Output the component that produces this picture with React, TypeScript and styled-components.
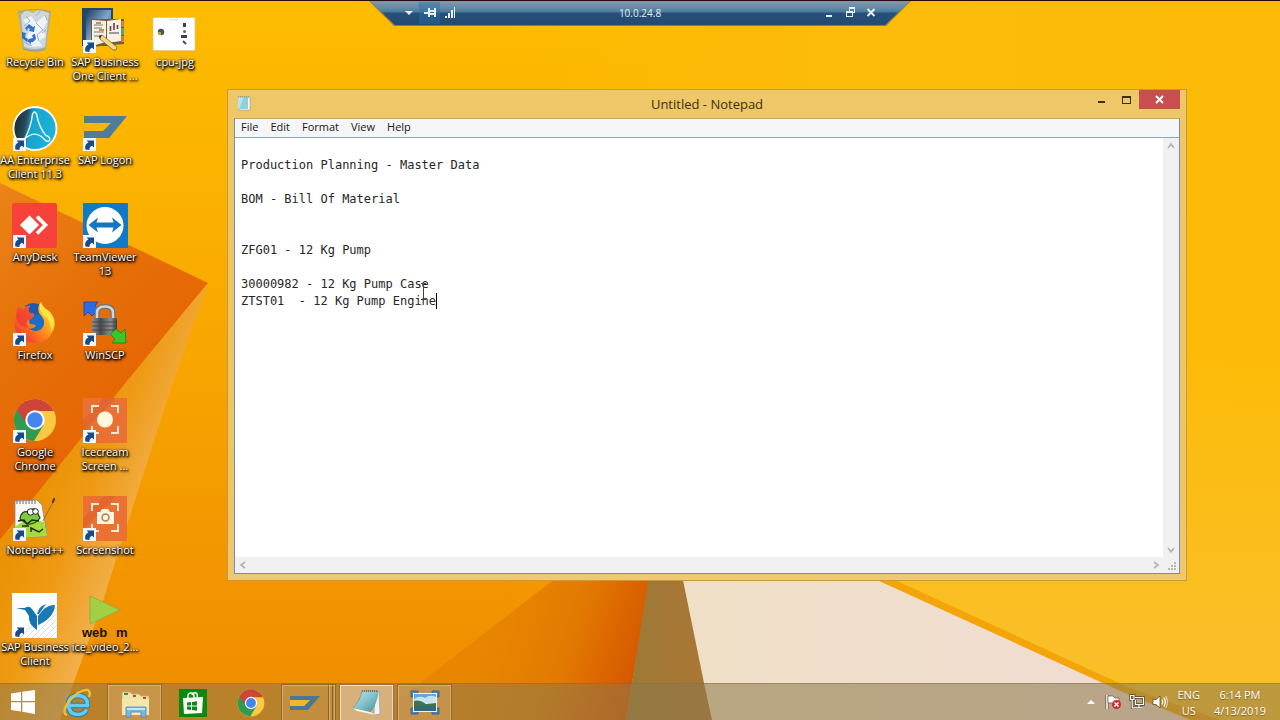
import React from 'react';
import styled, { createGlobalStyle, css } from 'styled-components';

const GlobalStyle = createGlobalStyle`
  *, *::before, *::after { box-sizing: border-box; }
  body {
    margin: 0;
    font-family: "Open Sans", "Noto Sans", sans-serif;
    font-size: 11px;
    color: #1c1c1c;
  }
  button {
    margin: 0;
    padding: 0;
    border: 0;
    background: none;
    font: inherit;
    color: inherit;
    cursor: default;
  }
  svg { display: block; }
`;

/* ---------- Desktop ---------- */

const Desktop = styled.div`
  position: relative;
  isolation: isolate;
  min-height: 100vh;
  display: flex;
  flex-direction: column;
  overflow: hidden;
  background: #fbb400;
`;

const Wallpaper = styled.svg`
  position: absolute;
  inset: 0;
  width: 100%;
  height: 100%;
  z-index: -1;
`;

const IconGrid = styled.main`
  flex: 1;
  display: grid;
  grid-auto-flow: column;
  grid-template-rows: repeat(7, minmax(84px, 1fr));
  grid-auto-columns: 70px;
  justify-content: start;
`;

const Shortcut = styled.button<{ $column: number; $row: number }>`
  grid-column: ${(p) => p.$column};
  grid-row: ${(p) => p.$row};
  display: flex;
  flex-direction: column;
  align-items: center;
  gap: 1px;
  padding-top: 8px;
`;

const ShortcutLabel = styled.span`
  line-height: 14px;
  color: #fff;
  white-space: pre;
  text-align: center;
  text-shadow: 0 1px 2px #000, 1px 1px 2px #000, 0 0 3px rgba(0, 0, 0, 0.8), 1px 2px 3px rgba(0, 0, 0, 0.7);
`;

/* ---------- Remote session bar ---------- */

const SessionBarOuter = styled.header`
  position: absolute;
  top: 0;
  left: 0;
  right: 0;
  display: flex;
  justify-content: center;
  border-top: 1px solid #2a0a08;
  z-index: 3;
`;

const SessionBarEdge = styled.div`
  width: 542px;
  padding: 0 1px 1px;
  background: #8b7d3a;
  clip-path: polygon(0 0, 100% 0, calc(100% - 25px) 100%, 25px 100%);
`;

const SessionBar = styled.div`
  display: grid;
  grid-template-columns: 1fr auto 1fr;
  align-items: center;
  height: 24px;
  padding: 0 28px;
  color: #e8eef4;
  background: linear-gradient(#8199ad 0, #648aa6 7px, #4b789b 11px, #27507a 12px, #234a70 24px);
  clip-path: polygon(0 0, 100% 0, calc(100% - 25px) 100%, 25px 100%);
`;

const SessionAddress = styled.span`
  font-size: 10px;
`;

const SessionGroup = styled.div<{ $end?: boolean }>`
  display: flex;
  justify-content: ${(p) => (p.$end ? 'flex-end' : 'flex-start')};
`;

const SessionButton = styled.button<{ $pinned?: boolean }>`
  display: grid;
  place-items: center;
  width: 21px;
  height: 22px;
  background: ${(p) => (p.$pinned ? 'rgba(40, 110, 165, 0.45)' : 'none')};
`;

/* ---------- Notepad window ---------- */

const Window = styled.section`
  position: absolute;
  top: 89px;
  left: 227px;
  right: 93px;
  bottom: 139px;
  display: flex;
  flex-direction: column;
  padding: 0 6px 6px;
  border: 1px solid #c79a38;
  background: linear-gradient(#edc768, #ecc564 80%, #f0c774);
  z-index: 2;
`;

const TitleBar = styled.div`
  display: grid;
  grid-template-columns: 1fr auto 1fr;
  align-items: center;
  height: 28px;
  color: #3a2f16;
`;

const WindowTitle = styled.h1`
  margin: 0;
  font-size: 13px;
  line-height: 26px;
  font-weight: 400;
`;

const TitleIcon = styled.span`
  padding-left: 3px;
`;

const CaptionButtons = styled.div`
  align-self: start;
  justify-self: end;
  display: flex;
`;

const CaptionButton = styled.button<{ $close?: boolean }>`
  display: grid;
  place-items: center;
  width: 25px;
  height: 19px;
  ${(p) =>
    p.$close &&
    css`
      width: 41px;
      background: #c84f50;
    `}
`;

const Client = styled.div`
  flex: 1;
  display: flex;
  flex-direction: column;
  min-height: 0;
  border: 1px solid #6f93a8;
  border-top-color: #c2a65e;
`;

const MenuBar = styled.nav`
  display: flex;
  height: 19px;
  background: #f5f6f7;
  border-bottom: 1px solid #8aa9c0;
`;

const MenuItem = styled.button`
  align-self: flex-start;
  padding: 0 6px;
  line-height: 16px;
  color: #1b1520;
`;

const EditorGrid = styled.div`
  flex: 1;
  display: grid;
  grid-template-columns: 1fr 16px;
  grid-template-rows: 1fr 16px;
  min-height: 0;
  background: #f0f0f0;
`;

const Page = styled.div`
  position: relative;
  display: flex;
  font: 12px/17px "DejaVu Sans Mono", "Liberation Mono", monospace;
  background: #fff;
`;

const TextArea = styled.textarea`
  flex: 1;
  margin: 0;
  padding: 2px 6px;
  border: 0;
  outline: 0;
  resize: none;
  overflow: hidden;
  background: none;
  font: inherit;
  color: #262626;
  white-space: pre;
`;

const Caret = styled.span<{ $line: number; $char: number }>`
  position: absolute;
  top: calc(2px + ${(p) => p.$line} * 17px);
  left: calc(6px + ${(p) => p.$char} * 1ch);
  width: 1px;
  height: 16px;
  background: #000;
`;

const Pointer = styled.svg`
  position: absolute;
  top: 145px;
  left: 185px;
`;

const ScrollBar = styled.div<{ $horizontal?: boolean }>`
  display: flex;
  flex-direction: ${(p) => (p.$horizontal ? 'row' : 'column')};
  justify-content: space-between;
`;

const ScrollButton = styled.button`
  display: grid;
  place-items: center;
  width: 15px;
  height: 15px;
`;

const Grip = styled.span`
  display: grid;
  place-items: end;
  padding: 3px;
`;

/* ---------- Taskbar ---------- */

const Taskbar = styled.footer`
  display: flex;
  justify-content: space-between;
  height: 37px;
  border-top: 1px solid rgba(130, 105, 60, 0.45);
  background: rgba(140, 120, 76, 0.55);
`;

const TaskList = styled.div`
  display: flex;
  gap: 3px;
`;

const StartButton = styled.button`
  display: grid;
  place-items: center;
  width: 46px;
`;

type TaskState = 'pinned' | 'open' | 'stacked' | 'active';

const TaskButton = styled.button<{ $state: TaskState }>`
  display: grid;
  place-items: center;
  width: 55px;
  border: 1px solid transparent;
  border-bottom: 0;
  ${(p) =>
    p.$state !== 'pinned' &&
    css`
      border-color: rgba(110, 80, 35, 0.6);
      background: rgba(230, 190, 140, 0.32);
      box-shadow: inset 1px 1px 0 rgba(255, 230, 190, 0.35), inset -1px 0 0 rgba(255, 230, 190, 0.3);
    `}
  ${(p) =>
    p.$state === 'active' &&
    css`
      background: rgba(240, 215, 190, 0.55);
      box-shadow: inset 1px 1px 0 rgba(255, 245, 230, 0.7), inset -1px 0 0 rgba(255, 245, 230, 0.6);
    `}
  ${(p) =>
    p.$state === 'stacked' &&
    css`
      padding-right: 8px;
      background:
        linear-gradient(90deg, transparent 46px, rgba(110, 80, 35, 0.7) 46px 47px, rgba(255, 225, 180, 0.4) 47px 48px,
          transparent 48px 50px, rgba(110, 80, 35, 0.7) 50px 51px, transparent 51px),
        rgba(225, 185, 120, 0.25);
    `}
`;

const Tray = styled.div`
  display: flex;
  align-items: center;
  padding-right: 14px;
  color: #fff;
`;

const TrayButton = styled.button`
  display: grid;
  place-items: center;
  width: 23px;
  height: 36px;
`;

const TrayText = styled.button`
  padding: 2px 8px 0 6px;
  line-height: 16px;
  text-align: center;
  text-shadow: 0 1px 1px rgba(60, 40, 10, 0.5);

  & > * { display: block; }
  & + & { padding-right: 0; }
`;

/* ---------- Wallpaper drawing ---------- */

const WallpaperArt = () => (
  <Wallpaper viewBox="0 0 1280 720" preserveAspectRatio="none" aria-hidden="true">
    <defs>
      <linearGradient id="sky" x1="0" y1="0" x2="0" y2="1">
        <stop offset="0" stopColor="#fdbc00" />
        <stop offset=".3" stopColor="#fbb000" />
        <stop offset=".7" stopColor="#f49a00" />
        <stop offset="1" stopColor="#ef8c00" />
      </linearGradient>
      <linearGradient id="east" x1="0" y1="0" x2="1" y2="0">
        <stop offset=".4" stopColor="#fdba08" stopOpacity="0" />
        <stop offset=".65" stopColor="#fdbb0a" />
        <stop offset="1" stopColor="#fdbb08" />
      </linearGradient>
      <linearGradient id="corner" x1="0" y1="0" x2="0" y2="1">
        <stop offset=".5" stopColor="#f9c030" stopOpacity="0" />
        <stop offset=".9" stopColor="#f9c030" stopOpacity=".8" />
      </linearGradient>
      <linearGradient id="wedge" x1="0" y1="0" x2=".6" y2="1">
        <stop offset="0" stopColor="#ea8418" />
        <stop offset=".4" stopColor="#e66f08" />
        <stop offset="1" stopColor="#e55f00" />
      </linearGradient>
      <linearGradient id="glow" gradientUnits="userSpaceOnUse" x1="30" y1="450" x2="150" y2="500">
        <stop offset="0" stopColor="#ea9000" />
        <stop offset=".55" stopColor="#ee9a14" />
        <stop offset="1" stopColor="#f2b04c" />
      </linearGradient>
      <linearGradient id="fold" gradientUnits="userSpaceOnUse" x1="500" y1="600" x2="650" y2="650">
        <stop offset="0" stopColor="#e88600" />
        <stop offset=".5" stopColor="#e27a02" />
        <stop offset=".7" stopColor="#de6a00" />
        <stop offset="1" stopColor="#d45500" />
      </linearGradient>
      <linearGradient id="shade" x1="0" y1="0" x2="1" y2="0">
        <stop offset="0" stopColor="#9c7a38" />
        <stop offset="1" stopColor="#ac7634" />
      </linearGradient>
      <linearGradient id="paper" x1="0" y1="0" x2="1" y2="0">
        <stop offset="0" stopColor="#f0dfc6" />
        <stop offset="1" stopColor="#f0dcd4" />
      </linearGradient>
    </defs>
    <rect width="1280" height="720" fill="url(#sky)" />
    <rect width="1280" height="720" fill="url(#east)" />
    <path d="M860 0H1280V720H860Z" fill="url(#corner)" />
    <path d="M0 183L208 283L128 380L48 480L0 540Z" fill="url(#wedge)" />
    <path d="M208 283L128 380L48 480L0 540V720H60L100 610L135 500L172 385Z" fill="url(#glow)" />
    <path d="M556 578L420 683L372 720H626L632 683L650 578Z" fill="url(#fold)" />
    <path d="M649 575L632 683L626 720H713L682 575Z" fill="url(#shade)" />
    <path d="M682 575L704 683L712 720H1200L866 575Z" fill="url(#paper)" />
    <path d="M866 575L1118 690L1190 720H1220L1130 688L884 575Z" fill="#f3a408" />
  </Wallpaper>
);

/* ---------- Desktop icons ---------- */

const ShortcutArrow = () => (
  <path d="M3.500 43.500C2.500 40 4 37.500 6.500 36.800L4.800 34.500H12V41.500L10 39.700C8 40.500 7.200 42 7.500 44Z" fill="#174a8c" />
);

const Art = ({ children, linked = true }: { children: React.ReactNode; linked?: boolean }) => (
  <svg width="46" height="46" viewBox="0 0 46 46" aria-hidden="true">
    {children}
    {linked && (
      <g>
        <path d="M1 32H14V45H1Z" fill="#f2f5fa" />
        <ShortcutArrow />
      </g>
    )}
  </svg>
);

const RecycleBinIcon = () => (
  <Art linked={false}>
    <path d="M6 4L11 41Q23 46 34 41L39 4Z" fill="#a3aeb4" opacity=".9" />
    <path d="M9 7L14 2L21 5L27 1L33 4L37 5L33 39Q23 43 12 39Z" fill="#ccd7de" />
    <path d="M11 12L19 8L24 15L33 7L35 14L31 22L34 28L27 33L30 38L18 39L21 30L14 31L18 22Z" fill="#eef3f7" />
    <path d="M24 15L31 22L25 27L27 33M14 8L18 13L12 18M33 7L35 12M28 3L24 8M12 34L20 38M30 25L34 22" fill="none" stroke="#a0b0bc" />
    <path d="M6 4Q23 -1 39 4M11 41Q23 45 34 41" fill="none" stroke="#8b999f" />
    <g fill="#2f74c8">
      <path d="M13 20L17 16L21 19L23 18L22 24L17 23L18 21L16 20L15 23Z" />
      <path d="M10 24L14 25L13 29L16 31L15 34L10 30Z" />
      <path d="M17 31L21 30L20 27L23 26L24 31L21 34L19 34L19 36L15 33Z" />
    </g>
  </Art>
);

const BusinessOneIcon = () => (
  <Art>
    <defs>
      <linearGradient id="binder" x1="0" y1="0" x2="1" y2="1">
        <stop offset="0" stopColor="#1c3d63" />
        <stop offset=".5" stopColor="#7ea6c8" />
        <stop offset="1" stopColor="#234a72" />
      </linearGradient>
    </defs>
    <path d="M0 0H31V38H0Z" fill="#24466b" />
    <path d="M4 2H29V34L4 38Z" fill="url(#binder)" />
    <path d="M9 11H42V36L9 39Z" fill="#7a5b36" />
    <path d="M39 13H42V19H39ZM39 28H42V34H39Z" fill="#d67a34" />
    <path d="M39 20H42V27H39Z" fill="#5ca567" />
    <path d="M10 12L24 13V34L10 38ZM25 13L39 11V33L25 35Z" fill="#f4f1e4" />
    <path d="M12 17H21M12 20H20M12 24H22M12 28H19" stroke="#787b80" />
    <path d="M14 15H19M17 22H22" stroke="#c59148" strokeWidth="2" />
    <path d="M28.500 23V18M32 22V15M35.500 21V17" stroke="#6d3c48" strokeWidth="1.600" />
    <path d="M27 25H37" stroke="#444" />
    <path d="M17 28L20 27L35 39L34 42L31 42L18 31Z" fill="#f3d98c" stroke="#8a6427" strokeWidth=".8" />
    <path d="M17 28L20 27L18 31Z" fill="#44351f" />
  </Art>
);

const ImageFileIcon = () => (
  <Art linked={false}>
    <path d="M1 9.500H43V42.500H1Z" fill="#fff" stroke="#d8c78e" strokeWidth=".7" />
    <circle cx="9" cy="24" r="3.200" fill="#3f5560" />
    <path d="M6 24A3 3 0 0 0 9 27V24Z" fill="#e39a26" />
    <path d="M18 12H26" stroke="#ddd" />
    <path d="M31 15H34V19H31ZM29 27H35V30H29Z" fill="#39424f" />
    <circle cx="32.500" cy="23.500" r="1.500" fill="#5c6672" />
    <path d="M31 33L34 36" stroke="#46505c" strokeWidth="2" />
  </Art>
);

const EnterpriseIcon = () => (
  <Art>
    <defs>
      <linearGradient id="aa" x1="0" y1=".3" x2="1" y2=".5">
        <stop offset="0" stopColor="#17262f" />
        <stop offset=".28" stopColor="#2b4a59" />
        <stop offset=".42" stopColor="#16a5cd" />
        <stop offset="1" stopColor="#1fb3dc" />
      </linearGradient>
    </defs>
    <circle cx="23" cy="22.500" r="21.500" fill="url(#aa)" stroke="#fff" strokeWidth="1.800" />
    <path d="M12 34Q19 22 20.500 8Q22.500 4 24.500 8Q27.500 23 34 29.500Q39 31 37.500 34.500Q35.500 37 31.500 32.500Q22 23 12 34" fill="none" stroke="#e8fbff" strokeWidth="1.400" />
  </Art>
);

const SapLogonIcon = () => (
  <Art>
    <path d="M2 10H45L27 32H2V25H21L29 17H2Z" fill="#4d7d99" />
    <path d="M2 19H25L20 24H2Z" fill="#f2b70c" />
  </Art>
);

const AnyDeskIcon = () => (
  <Art>
    <rect x="0" y="0" width="45" height="45" rx="2" fill="#f6423a" />
    <path d="M8 22L17.500 12.500L27 22L17.500 31.500Z" fill="#fff" />
    <path d="M25 13.500L33.500 22L25 30.500" fill="none" stroke="#fff" strokeWidth="3.600" />
  </Art>
);

const TeamViewerIcon = () => (
  <Art>
    <rect x="1" y="0" width="45" height="45" rx="1" fill="#0f7ac8" />
    <circle cx="23" cy="22.500" r="18.500" fill="#fff" />
    <path d="M6.500 22L16 14.500L14.500 19.500H31.500L30 14.500L39.500 22L30 29.500L31.500 24.500H14.500L16 29.500Z" fill="#1277c2" />
  </Art>
);

const FirefoxIcon = () => (
  <Art>
    <defs>
      <linearGradient id="fox" x1="1" y1="0" x2="0" y2="1">
        <stop offset="0" stopColor="#fff04a" />
        <stop offset=".35" stopColor="#ffb21c" />
        <stop offset=".65" stopColor="#ff6a1f" />
        <stop offset="1" stopColor="#e5164f" />
      </linearGradient>
    </defs>
    <circle cx="23" cy="19" r="15.500" fill="#1b6dc8" />
    <path d="M13 5Q21 -1 30 5L28 14L18 12Z" fill="#2358b0" />
    <path d="M6 6Q9 7 11 9Q15 4 18 5Q15 9 18 12L22 13Q22 17 18 18Q16 20 18 23Q23 23 24 25Q20 29 16 27Q21 32 28 29Q33 26 32 19Q30 15 27 12Q25 5 29 1Q31 7 37 10Q45 18 42 28Q36 42 23 42Q8 41 3 28Q1 16 6 6Z" fill="url(#fox)" />
    <path d="M6 6Q9 7 11 9Q15 4 18 5Q15 9 18 12L22 13Q22 17 18 18Q12 21 16 27Q5 25 4 16Q4 10 6 6Z" fill="#ee3434" opacity=".75" />
    <path d="M29 1Q31 7 37 10Q46 20 39 31Q40 19 31 14Q26 8 29 1Z" fill="#ffe64a" opacity=".9" />
  </Art>
);

const WinScpIcon = () => (
  <Art>
    <path d="M2 1H16L13 5L17 9L10 15L6 11L2 15Z" fill="#2a6cea" stroke="#1c459e" strokeWidth=".8" />
    <path d="M15 20V12Q15 5.500 23 5.500Q31 5.500 31 12V20" fill="none" stroke="#6e7377" strokeWidth="5" />
    <path d="M15 20V12Q15 5.500 23 5.500Q31 5.500 31 12V20" fill="none" stroke="#d3d6d8" strokeWidth="2.500" />
    <defs>
      <linearGradient id="lock" x1="0" y1="0" x2="1" y2="0">
        <stop offset="0" stopColor="#8f9497" />
        <stop offset=".35" stopColor="#484b4e" />
        <stop offset=".75" stopColor="#8a8e91" />
        <stop offset="1" stopColor="#3e4143" />
      </linearGradient>
    </defs>
    <rect x="10" y="17" width="25" height="17" rx="1.500" fill="url(#lock)" />
    <path d="M10 21H35M10 25H35M10 29H35" stroke="#3a3d3f" strokeWidth=".8" />
    <path d="M44 42H30L33 38L28 33L34 28L39 32L43 28Z" fill="#3ac62a" stroke="#1b7d18" strokeWidth=".8" />
  </Art>
);

const ChromeArt = () => (
  <g>
    <circle cx="23" cy="22" r="21" fill="#fbc944" />
    <path d="M23 22L4.800 11.500A21 21 0 0 0 22 43L31.500 27Z" fill="#2f9b52" />
    <path d="M4.800 11.500A21 21 0 0 1 42 13H23L14.500 26Z" fill="#cf4439" />
    <circle cx="23" cy="22" r="9.700" fill="#fff" />
    <circle cx="23" cy="22" r="7.700" fill="#4586ee" />
  </g>
);

const ChromeIcon = () => (
  <Art>
    <ChromeArt />
  </Art>
);

const CaptureFrame = () => (
  <g>
    <rect x="1" y="0" width="44" height="45" fill="#ea7033" />
    <path d="M1 22L22 0H34L1 34Z" fill="#de5f2b" opacity=".6" />
    <path d="M10 15V8H17M29 8H36V15M36 28V35H29M10 28V35H17" fill="none" stroke="#ffe9d2" strokeWidth="2" />
  </g>
);

const IcecreamIcon = () => (
  <Art>
    <CaptureFrame />
    <circle cx="23" cy="21.500" r="8" fill="#fff8dc" />
  </Art>
);

const ScreenshotIcon = () => (
  <Art>
    <CaptureFrame />
    <path d="M15 16H18L20 13H26L28 16H32V28H15Z" fill="#fff4e0" />
    <circle cx="23.500" cy="21.500" r="3.500" fill="#fff4e0" stroke="#b5805c" strokeWidth="1.600" />
  </Art>
);

const NotepadPlusIcon = () => (
  <Art>
    <path d="M3 5L25 4L30 9L35 40L3 42Z" fill="#f8f8f6" stroke="#8c8c88" strokeWidth=".8" />
    <path d="M5 5V8M8 5V8M11 5V8M14 5V8M17 4V8M20 4V8M23 4V8" stroke="#6a6a6a" />
    <path d="M3 31Q15 20 32 26L35 40L3 42Z" fill="#a3dc3c" />
    <path d="M8 23Q9 14 17 16Q20 11 24 14L28 22Q23 29 15 28Z" fill="#7ccc40" stroke="#22401a" strokeWidth="1.200" />
    <circle cx="18.500" cy="16" r="3.200" fill="#fff" stroke="#222" />
    <circle cx="23.500" cy="15.500" r="2.800" fill="#fff" stroke="#222" />
    <path d="M6 25L12 24L15 28L20 24L27 25M10 30L17 30M19 36V32L27 36L31 33" fill="none" stroke="#1c2b18" strokeWidth="1.400" />
    <path d="M31 25L41 6" stroke="#8a6420" strokeWidth=".8" />
    <path d="M40 6L42 2L43 3L41 7Z" fill="#43301a" stroke="#43301a" strokeWidth=".6" />
  </Art>
);

const BusinessClientIcon = () => (
  <Art linked={false}>
    <path d="M0 0H45V45H0Z" fill="#fbfdfe" />
    <path d="M14 45L45 14M20 45L45 20M26 45L45 26M32 45L45 32M38 45L45 38M8 45L30 23" stroke="#d2dde4" />
    <path d="M4 15L13 15Q17 12 20 16L25 23V37Q16 31 17 23L13 17Z" fill="#1573ae" />
    <path d="M26 23Q34 11 43 12Q42 25 26 32Z" fill="#1b7ab5" />
    <path d="M25 21Q27 13 34 11L27 21Z" fill="#1b7ab5" />
    <ShortcutArrow />
  </Art>
);

const WebmText = styled.text`
  font: 700 13px "Liberation Sans", Arial, sans-serif;
  fill: #16130c;
`;

const WebmIcon = () => (
  <svg width="46" height="46" viewBox="0 0 46 46" overflow="visible" aria-hidden="true">
    <path d="M8 3L38 17L8 31Z" fill="#a2cf45" stroke="#86ad34" strokeWidth=".8" />
    <WebmText x="0" y="44">web</WebmText>
    <circle cx="30" cy="41" r="1.500" fill="#d0a030" />
    <WebmText x="34" y="44">m</WebmText>
  </svg>
);

/* ---------- Taskbar icons ---------- */

const WindowsIcon = () => (
  <svg width="26" height="26" viewBox="0 0 26 26" aria-hidden="true">
    <path d="M1 4.500L11 3V12H1ZM12.300 2.800L25 1V12H12.300ZM1 13.300H11V22.500L1 21ZM12.300 13.300H25V25L12.300 22.800Z" fill="#fff" />
  </svg>
);

const ExplorerIcon = () => (
  <svg width="30" height="30" viewBox="0 0 30 30" aria-hidden="true">
    <path d="M8 17.500H25.500Q26 8 16 7.500Q6.500 8 6.500 17Q7 26.500 16 26.500Q22 26.500 24.500 21.500" fill="none" stroke="#1f7db8" strokeWidth="5.400" />
    <path d="M8 17.500H25.500Q26 8 16 7.500Q6.500 8 6.500 17Q7 26.500 16 26.500Q22 26.500 24.500 21.500" fill="none" stroke="#62cbf2" strokeWidth="3.600" />
    <path d="M5 27Q-1 25 7 13Q18 1 26 2Q29 4 27 9" fill="none" stroke="#f0c02c" strokeWidth="2.400" />
  </svg>
);

const FolderIcon = () => (
  <svg width="32" height="32" viewBox="0 0 32 32" aria-hidden="true">
    <path d="M3 5H11L13 7H20L22 9H30V28H3Z" fill="#f3e3a4" stroke="#c9a85a" strokeWidth=".8" />
    <path d="M5 6H9V8H5Z" fill="#3f8e4a" />
    <path d="M14 8H17V10H14ZM24 10H27V12H24Z" fill="#b04b36" />
    <path d="M3 12H30V28H3Z" fill="#f5e6ae" />
    <path d="M7 30V20H27V30H22V25H12V30Z" fill="#79b6e2" stroke="#4c8cba" strokeWidth=".8" />
    <path d="M8 21H26V23H8Z" fill="#c4e3f5" />
  </svg>
);

const StoreIcon = () => (
  <svg width="28" height="28" viewBox="0 0 28 28" aria-hidden="true">
    <path d="M0 0H28V28H0Z" fill="#0b8a10" />
    <path d="M4 9L24 8L23 24L5 25Z" fill="#fff" />
    <path d="M9 10V7Q9 4 12 4Q15 4 15 7V9M13 6Q14 3 17 4Q19 5 18 9" fill="none" stroke="#fff" strokeWidth="1.400" />
    <path d="M8 13.500L12 13V16.500H8ZM13 13L18 12.200V16.500H13ZM8 17.500H12V21L8 20.500ZM13 17.500H18V21.800L13 21Z" fill="#0b8a10" />
  </svg>
);

const ChromeTaskIcon = () => (
  <svg width="28" height="28" viewBox="1 0 44 44" aria-hidden="true">
    <ChromeArt />
  </svg>
);

const SapTaskIcon = () => (
  <svg width="30" height="18" viewBox="0 0 30 18" aria-hidden="true">
    <path d="M0 2H30L18 16H0V12H14L20 6H0Z" fill="#4a7793" />
    <path d="M0 6H20L14 12H0Z" fill="#f2b824" />
  </svg>
);

const NotepadTaskIcon = () => (
  <svg width="30" height="30" viewBox="0 0 30 30" aria-hidden="true">
    <defs>
      <linearGradient id="pad" x1="0" y1="0" x2="1" y2="1">
        <stop offset="0" stopColor="#c4e2e5" />
        <stop offset=".5" stopColor="#86c2cc" />
        <stop offset="1" stopColor="#448f9f" />
      </linearGradient>
    </defs>
    <path d="M23 3L27 4L28 26L22 27Z" fill="#eef3f4" stroke="#8a999c" strokeWidth=".6" />
    <path d="M10 3L26 3Q25 16 18 24L1 20Q8 13 10 3Z" fill="url(#pad)" stroke="#5f8790" strokeWidth=".6" />
    <path d="M10 3H26" stroke="#5b6c70" strokeWidth="1.500" strokeDasharray="1 1" />
    <path d="M1 20L18 24L24 27L5 23Z" fill="#f7f7f4" />
  </svg>
);

const PhotoIcon = () => (
  <svg width="30" height="26" viewBox="0 0 30 26" aria-hidden="true">
    <path d="M1 1H8V7H1ZM22 1H29V7H22ZM1 18H8V24H1ZM22 18H29V24H22Z" fill="#4b83b8" stroke="#2d5e92" strokeWidth=".8" />
    <path d="M3 3H27V22H3Z" fill="#eaf4fa" />
    <path d="M4 4H26V13H4Z" fill="#5fa8e0" />
    <path d="M4 9Q10 5 15 8Q20 4 26 7V13H4Z" fill="#c7e2f3" />
    <path d="M4 11Q10 9 16 14L26 13V17H4Z" fill="#3d7546" />
    <path d="M4 16H26V21H4Z" fill="#31697f" />
  </svg>
);

const SmallPadIcon = () => (
  <svg width="14" height="16" viewBox="0 0 14 16" aria-hidden="true">
    <path d="M2 1H13V14H2Z" fill="#fff" stroke="#8c9c8e" strokeWidth=".6" />
    <path d="M1 1H11V13H1Z" fill="#8ed0dc" />
    <path d="M1 1H7L2 13H1Z" fill="#b7e4ea" />
    <path d="M1 1H12" stroke="#6b8c92" strokeDasharray="1 1" />
  </svg>
);

/* ---------- Small glyphs ---------- */

type ChevronProps = { turn: 'up' | 'down' | 'left' | 'right' };

const chevrons: Record<ChevronProps['turn'], string> = {
  up: 'M1 6L4 2L7 6',
  down: 'M1 2L4 6L7 2',
  left: 'M6 1L2 4L6 7',
  right: 'M2 1L6 4L2 7',
};

const Chevron = ({ turn }: ChevronProps) => (
  <svg width="8" height="8" viewBox="0 0 8 8" aria-hidden="true">
    <path d={chevrons[turn]} fill="none" stroke="#b0b0b0" strokeWidth="1.600" />
  </svg>
);

const Glyph = ({ d, stroke }: { d: string; stroke?: boolean }) => (
  <svg width="12" height="12" viewBox="0 0 12 12" aria-hidden="true">
    <path d={d} fillRule="evenodd" fill={stroke ? 'none' : 'currentColor'} stroke={stroke ? 'currentColor' : 'none'} strokeWidth="2" />
  </svg>
);

const FlagIcon = () => (
  <svg width="17" height="16" viewBox="0 0 17 16" aria-hidden="true">
    <path d="M2 1V15" stroke="#5e4b2c" strokeWidth="3" />
    <path d="M2 1V15" stroke="#fff" strokeWidth="1.600" />
    <path d="M3 2H8L10 4H14V10H8L7 9H3Z" fill="#fff" stroke="#5e4b2c" strokeWidth=".7" />
    <circle cx="11.500" cy="10.500" r="4.500" fill="#cf2a2f" />
    <path d="M9.500 8.500L13.500 12.500M13.500 8.500L9.500 12.500" stroke="#fff" strokeWidth="1.400" />
  </svg>
);

const NetworkIcon = () => (
  <svg width="16" height="16" viewBox="0 0 16 16" aria-hidden="true">
    <path d="M6 3.500H14.500V10.500H6.500V6M10 11V13.500M6 13.800H14M1.500 1.500H5V5.500H1.500ZM3.200 6V13.800H6" fill="none" stroke="#55411f" strokeWidth="2.600" />
    <path d="M6 3.500H14.500V10.500H6.500V6M10 11V13.500M6 13.800H14M1.500 1.500H5V5.500H1.500ZM3.200 6V13.800H6" fill="none" stroke="#fff" strokeWidth="1.200" />
  </svg>
);

const SpeakerIcon = () => (
  <svg width="16" height="16" viewBox="0 0 16 16" aria-hidden="true">
    <path d="M1 5.500H4L8 2V14L4 10.500H1Z" fill="#fff" stroke="#5e4b2c" strokeWidth=".8" />
    <path d="M10 5.500Q11.500 8 10 10.500M12 3.500Q14.500 8 12 12.500" fill="none" stroke="#fff" strokeWidth="1.300" />
    <path d="M13.800 2Q17 8 13.800 14" fill="none" stroke="#e8dcc4" />
  </svg>
);

/* ---------- Content ---------- */

const shortcuts = [
  { label: 'Recycle Bin', column: 1, row: 1, Icon: RecycleBinIcon },
  { label: 'AA Enterprise\nClient 11.3', column: 1, row: 2, Icon: EnterpriseIcon },
  { label: 'AnyDesk', column: 1, row: 3, Icon: AnyDeskIcon },
  { label: 'Firefox', column: 1, row: 4, Icon: FirefoxIcon },
  { label: 'Google\nChrome', column: 1, row: 5, Icon: ChromeIcon },
  { label: 'Notepad++', column: 1, row: 6, Icon: NotepadPlusIcon },
  { label: 'SAP Business\nClient', column: 1, row: 7, Icon: BusinessClientIcon },
  { label: 'SAP Business\nOne Client ...', column: 2, row: 1, Icon: BusinessOneIcon },
  { label: 'SAP Logon', column: 2, row: 2, Icon: SapLogonIcon },
  { label: 'TeamViewer\n13', column: 2, row: 3, Icon: TeamViewerIcon },
  { label: 'WinSCP', column: 2, row: 4, Icon: WinScpIcon },
  { label: 'Icecream\nScreen ...', column: 2, row: 5, Icon: IcecreamIcon },
  { label: 'Screenshot', column: 2, row: 6, Icon: ScreenshotIcon },
  { label: 'ice_video_2...', column: 2, row: 7, Icon: WebmIcon },
  { label: 'cpu-jpg', column: 3, row: 1, Icon: ImageFileIcon },
];

const tasks: { label: string; state: TaskState; Icon: () => React.ReactElement }[] = [
  { label: 'Internet Explorer', state: 'pinned', Icon: ExplorerIcon },
  { label: 'File Explorer', state: 'open', Icon: FolderIcon },
  { label: 'Store', state: 'pinned', Icon: StoreIcon },
  { label: 'Google Chrome', state: 'pinned', Icon: ChromeTaskIcon },
  { label: 'SAP Logon', state: 'stacked', Icon: SapTaskIcon },
  { label: 'Notepad', state: 'active', Icon: NotepadTaskIcon },
  { label: 'Photos', state: 'open', Icon: PhotoIcon },
];

const lines = [
  '',
  'Production Planning - Master Data',
  '',
  'BOM - Bill Of Material',
  '',
  '',
  'ZFG01 - 12 Kg Pump',
  '',
  '30000982 - 12 Kg Pump Case',
  'ZTST01  - 12 Kg Pump Engine',
];

const Notepad = () => (
  <Window aria-label="Untitled - Notepad">
    <TitleBar>
      <TitleIcon><SmallPadIcon /></TitleIcon>
      <WindowTitle>Untitled - Notepad</WindowTitle>
      <CaptionButtons>
        <CaptionButton aria-label="Minimize"><Glyph d="M2 7H9V9H2Z" /></CaptionButton>
        <CaptionButton aria-label="Maximize"><Glyph d="M1 2H10V10H1ZM2 4V9H9V4Z" /></CaptionButton>
        <CaptionButton $close aria-label="Close">
          <svg width="9" height="9" viewBox="0 0 9 9" aria-hidden="true">
            <path d="M1 1L8 8M8 1L1 8" stroke="#fff" strokeWidth="1.800" />
          </svg>
        </CaptionButton>
      </CaptionButtons>
    </TitleBar>
    <Client>
      <MenuBar aria-label="Menu">
        {['File', 'Edit', 'Format', 'View', 'Help'].map((name) => (
          <MenuItem key={name}>{name}</MenuItem>
        ))}
      </MenuBar>
      <EditorGrid>
        <Page>
          <TextArea aria-label="Document text" spellCheck={false} defaultValue={lines.join('\n')} />
          <Caret $line={lines.length - 1} $char={lines[lines.length - 1].length} />
          <Pointer width="7" height="17" viewBox="0 0 7 17" aria-hidden="true">
            <path d="M1 .5H3L3.500 1L4 .5H6M3.500 1V16M1 16.500H3L3.500 16L4 16.500H6" fill="none" stroke="#444" />
          </Pointer>
        </Page>
        <ScrollBar>
          <ScrollButton aria-label="Scroll up"><Chevron turn="up" /></ScrollButton>
          <ScrollButton aria-label="Scroll down"><Chevron turn="down" /></ScrollButton>
        </ScrollBar>
        <ScrollBar $horizontal>
          <ScrollButton aria-label="Scroll left"><Chevron turn="left" /></ScrollButton>
          <ScrollButton aria-label="Scroll right"><Chevron turn="right" /></ScrollButton>
        </ScrollBar>
        <Grip>
          <svg width="9" height="9" viewBox="0 0 9 9" aria-hidden="true">
            <path d="M7 1H9V3H7ZM4 4H6V6H4ZM7 4H9V6H7ZM1 7H3V9H1ZM4 7H6V9H4ZM7 7H9V9H7Z" fill="#b9b9b9" />
          </svg>
        </Grip>
      </EditorGrid>
    </Client>
  </Window>
);

export default function App() {
  return (
    <>
      <GlobalStyle />
      <Desktop>
        <WallpaperArt />
        <SessionBarOuter>
          <SessionBarEdge>
            <SessionBar>
              <SessionGroup>
                <SessionButton aria-label="Session menu"><Glyph d="M2 4H10L6 8Z" /></SessionButton>
                <SessionButton $pinned aria-label="Pin the bar">
                  <Glyph d="M0 5H4V1H6V3H10V1H12V10H10V8H6V10H4V7H0ZM6 5V6H10V5Z" />
                </SessionButton>
                <SessionButton aria-label="Connection quality">
                  <Glyph d="M0 9H2V11H0ZM3 6H5V11H3ZM6 3H8V11H6ZM9 0H10V11H9Z" />
                </SessionButton>
              </SessionGroup>
              <SessionAddress>10.0.24.8</SessionAddress>
              <SessionGroup $end>
                <SessionButton aria-label="Minimize session"><Glyph d="M2 8H8V10H2Z" /></SessionButton>
                <SessionButton aria-label="Restore session">
                  <Glyph d="M4 0H10V6H8V10H1V4H4ZM5 2V4H8V5H9V2ZM2 6V9H7V6Z" />
                </SessionButton>
                <SessionButton aria-label="Close session"><Glyph stroke d="M1.500 2L8.500 9M8.500 2L1.500 9" /></SessionButton>
              </SessionGroup>
            </SessionBar>
          </SessionBarEdge>
        </SessionBarOuter>

        <IconGrid>
          {shortcuts.map(({ label, column, row, Icon }) => (
            <Shortcut key={label} $column={column} $row={row}>
              <Icon />
              <ShortcutLabel>{label}</ShortcutLabel>
            </Shortcut>
          ))}
        </IconGrid>

        <Notepad />

        <Taskbar>
          <TaskList>
            <StartButton aria-label="Start"><WindowsIcon /></StartButton>
            {tasks.map(({ label, state, Icon }) => (
              <TaskButton key={label} $state={state} aria-label={label}>
                <Icon />
              </TaskButton>
            ))}
          </TaskList>
          <Tray>
            <TrayButton aria-label="Show hidden icons"><Glyph d="M2 8L6 4L10 8Z" /></TrayButton>
            <TrayButton aria-label="Action center"><FlagIcon /></TrayButton>
            <TrayButton aria-label="Network"><NetworkIcon /></TrayButton>
            <TrayButton aria-label="Volume"><SpeakerIcon /></TrayButton>
            <TrayText>
              <span>ENG</span>
              <span>US</span>
            </TrayText>
            <TrayText>
              <span>6:14 PM</span>
              <span>4/13/2019</span>
            </TrayText>
          </Tray>
        </Taskbar>
      </Desktop>
    </>
  );
}
